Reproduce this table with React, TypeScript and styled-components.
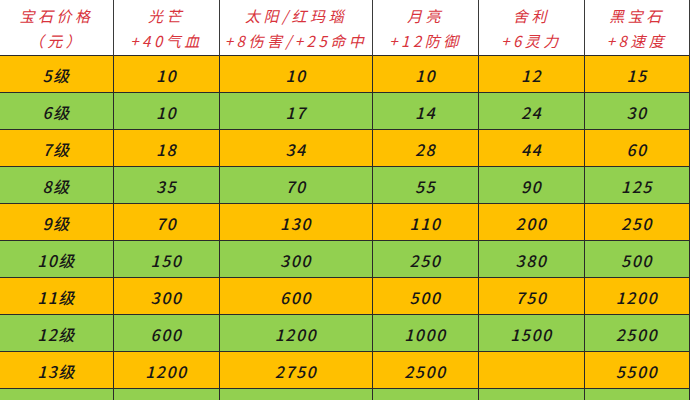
import styled, { createGlobalStyle } from "styled-components";

const GlobalStyle = createGlobalStyle`
  html, body {
    margin: 0;
    padding: 0;
    background: #ffffff;
  }
`;

const Grid = styled.div`
  display: grid;
  grid-template-columns: 113px 106px 153px 106px 106px 106px;
  width: 691px;
  height: 400px;
  overflow: hidden;
  font-family: "Noto Sans CJK SC", "DejaVu Sans", sans-serif;
`;

const HeadCell = styled.div<{ first?: boolean }>`
  height: 56px;
  box-sizing: border-box;
  border-left: ${(p) => (p.first ? "none" : "1px solid #3a3a3a")};
  border-bottom: 1px solid #2a2a2a;
  background: #ffffff;
  color: #d8333c;
  font-size: 15px;
  font-style: italic;
  letter-spacing: 3.5px;
  line-height: 25px;
  display: flex;
  flex-direction: column;
  align-items: center;
  justify-content: center;
  padding-top: 1px;
  white-space: nowrap;
`;

const Cell = styled.div<{ tone: "orange" | "green"; first?: boolean }>`
  height: 37px;
  box-sizing: border-box;
  border-left: ${(p) => (p.first ? "none" : "1px solid #2a2a2a")};
  border-bottom: 1px solid #2a2a2a;
  background: ${(p) => (p.tone === "orange" ? "#ffc000" : "#92d050")};
  color: #161616;
  font-size: 16px;
  font-weight: 500;
  font-style: italic;
  letter-spacing: 1.5px;
  display: flex;
  align-items: center;
  justify-content: center;
  padding-top: 1px;
`;

const EdgeCell = styled(Cell)`
  border-right: 1px solid #2a2a2a;
`;

const EdgeHead = styled(HeadCell)`
  border-right: 1px solid #3a3a3a;
`;

const headers: [string, string][] = [
  ["宝石价格", "（元）"],
  ["光芒", "+40气血"],
  ["太阳/红玛瑙", "+8伤害/+25命中"],
  ["月亮", "+12防御"],
  ["舍利", "+6灵力"],
  ["黑宝石", "+8速度"],
];

const rows: string[][] = [
  ["5级", "10", "10", "10", "12", "15"],
  ["6级", "10", "17", "14", "24", "30"],
  ["7级", "18", "34", "28", "44", "60"],
  ["8级", "35", "70", "55", "90", "125"],
  ["9级", "70", "130", "110", "200", "250"],
  ["10级", "150", "300", "250", "380", "500"],
  ["11级", "300", "600", "500", "750", "1200"],
  ["12级", "600", "1200", "1000", "1500", "2500"],
  ["13级", "1200", "2750", "2500", "", "5500"],
  ["14级", "", "", "", "", ""],
];

function App() {
  return (
    <>
      <GlobalStyle />
      <Grid>
        {headers.map(([a, b], i) => {
          const Head = i === headers.length - 1 ? EdgeHead : HeadCell;
          return (
            <Head key={a} first={i === 0}>
              <span>{a}</span>
              <span>{b}</span>
            </Head>
          );
        })}
        {rows.map((row, r) =>
          row.map((value, c) => {
            const Box = c === row.length - 1 ? EdgeCell : Cell;
            return (
              <Box
                key={`${r}-${c}`}
                tone={r % 2 === 0 ? "orange" : "green"}
                first={c === 0}
              >
                {r === rows.length - 1 ? "" : value}
              </Box>
            );
          })
        )}
      </Grid>
    </>
  );
}

export default App;
